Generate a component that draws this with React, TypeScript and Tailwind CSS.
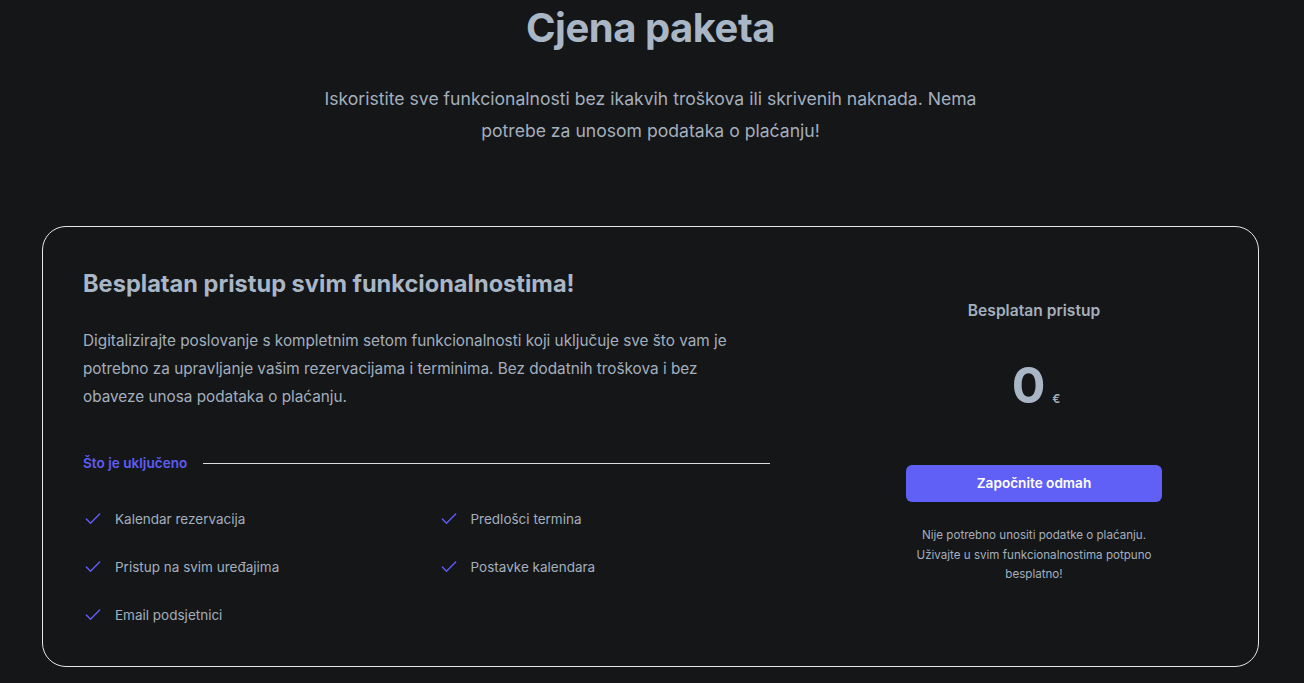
import { Check } from "lucide-react";

const features = [
  "Kalendar rezervacija",
  "Predlošci termina",
  "Pristup na svim uređajima",
  "Postavke kalendara",
  "Email podsjetnici",
];

export default function App() {
  return (
    <div className="min-h-screen bg-[#151618] font-['Inter',sans-serif] pl-[42px] pr-[45px] pb-10">
      <div className="flex flex-col items-center pt-[6px]">
        <h2 className="text-[40px] leading-[44px] font-bold tracking-[-0.012em] text-[#a9b6c6]">Cjena paketa</h2>
        <p className="mt-[33px] max-w-[672px] text-center text-[17.6px] leading-8 text-[#a3afbd]">
          Iskoristite sve funkcionalnosti bez ikakvih troškova ili skrivenih naknada. Nema potrebe za unosom
          podataka o plaćanju!
        </p>
      </div>

      <div className="mt-[79px] flex gap-20 rounded-3xl border border-[#e4e6ea] px-10 pt-[41px] pb-[41px]">
        <div className="flex-1">
          <h3 className="text-[23.6px] leading-8 font-bold text-[#a9b6c6]">Besplatan pristup svim funkcionalnostima!</h3>
          <p className="mt-[27px] max-w-[672px] text-[15.3px] leading-7 text-[#a3afbd]">
            Digitalizirajte poslovanje s kompletnim setom funkcionalnosti koji uključuje sve što vam je potrebno za
            upravljanje vašim rezervacijama i terminima. Bez dodatnih troškova i bez obaveze unosa podataka o plaćanju.
          </p>
          <div className="mt-10 flex items-center gap-x-4">
            <h4 className="flex-none text-[13.6px] font-semibold leading-6 text-[#5f5cf6]">Što je uključeno</h4>
            <div className="h-px flex-auto bg-[#d9dce1]" />
          </div>
          <ul className="mt-[34px] grid grid-cols-2 gap-x-6 gap-y-7 text-[13.5px] leading-5 text-[#a3afbd]">
            {features.map((f) => (
              <li key={f} className="flex gap-x-3">
                <Check className="h-5 w-5 flex-none text-[#5f5cf6]" strokeWidth={1.75} />
                {f}
              </li>
            ))}
          </ul>
        </div>

        <div className="flex w-[368px] flex-none flex-col items-center justify-center pb-[9px] text-center">
          <p className="text-[15.6px] leading-6 font-semibold text-[#a3afbd]">Besplatan pristup</p>
          <p className="mt-[38px] flex h-12 items-baseline justify-center gap-x-2 pl-1">
            <span className="text-[50px] leading-[48px] font-bold tracking-tight text-[#a9b6c6]">0</span>
            <span className="text-xs font-semibold text-[#a3afbd]">€</span>
          </p>
          <a
            href="#"
            className="mt-14 block h-[37px] w-64 rounded-md bg-[#6160f6] px-3 text-center text-[13.6px] leading-[37px] font-semibold text-white"
          >
            Započnite odmah
          </a>
          <p className="mt-6 max-w-[256px] text-[11.6px] leading-[19.5px] text-[#a3afbd]">
            Nije potrebno unositi podatke o plaćanju. Uživajte u svim funkcionalnostima potpuno besplatno!
          </p>
        </div>
      </div>
    </div>
  );
}
